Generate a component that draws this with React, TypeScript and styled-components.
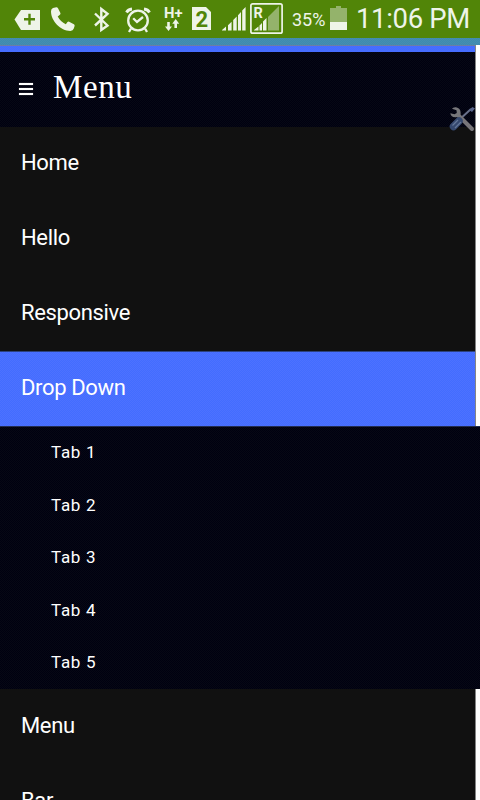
import React from 'react';
import styled, { createGlobalStyle } from 'styled-components';

const GlobalStyle = createGlobalStyle`
  body { margin: 0; background: #fff; overflow: hidden; }
  * { box-sizing: border-box; }
`;

const dither = (a: string, b: string) =>
  `repeating-conic-gradient(${a} 0% 25%, ${b} 0% 50%) 0 0 / 2px 2px`;

const Screen = styled.div`
  width: 480px;
  height: 800px;
  overflow: hidden;
  display: flex;
  flex-direction: column;
  background: #fff;
  color: #fff;
  font-family: Roboto, sans-serif;
`;

const StatusBar = styled.header`
  flex: none;
  height: 38px;
  display: flex;
  background: #518508;
  color: #eef4e8;
`;

const StatusIcon = styled.svg<{ $gap: number }>`
  flex: none;
  display: block;
  height: 38px;
  margin-left: ${(p) => p.$gap}px;
  overflow: visible;
`;

const StatusText = styled.span<{ $gap: number; $width: number; $size: number; $top: number; $spacing?: number }>`
  flex: none;
  width: ${(p) => p.$width}px;
  margin-left: ${(p) => p.$gap}px;
  padding-top: ${(p) => p.$top}px;
  font-size: ${(p) => p.$size}px;
  line-height: 30px;
  letter-spacing: ${(p) => p.$spacing ?? 0}px;
  white-space: nowrap;
`;

const TealStrip = styled.div`
  flex: none;
  height: 7px;
  background: ${dither('#3c8caf', '#488cb0')};
`;

const Panel = styled.div`
  flex: none;
  width: 476px;
  border-right: 1px solid #858585;
`;

const AccentStrip = styled.div`
  height: 7px;
  border-top: 1px solid #6d7ca4;
  background: ${dither('#426dff', '#4a6dff')};
`;

const MenuHeader = styled.div`
  position: relative;
  height: 75px;
  padding-left: 19px;
  display: flex;
  align-items: flex-start;
  background: ${dither('#000010', '#060814')};
`;

const Burger = styled.div`
  width: 14px;
  height: 12px;
  margin-top: 31px;
  display: flex;
  flex-direction: column;
  justify-content: space-between;
`;

const BurgerLine = styled.span`
  height: 2px;
  background: #fff;
  box-shadow: 0 0 1px #bbb;
`;

const Title = styled.h1`
  margin: 15px 0 0 20px;
  font: 400 33px/40px 'Liberation Serif', serif;
  letter-spacing: 0.6px;
`;

const Tools = styled.svg`
  position: absolute;
  left: 448px;
  top: 53px;
`;

const Item = styled.div<{ $active?: boolean }>`
  height: 75px;
  padding-left: 21px;
  font-size: 22px;
  line-height: 71px;
  letter-spacing: -0.35px;
  background: ${(p) => (p.$active ? dither('#426dff', '#4e71ff') : '#111')};
  ${(p) => p.$active && 'border-top: 1px solid #2c427f;'}
`;

const SubMenu = styled.div`
  flex: none;
  width: 480px;
  height: 263px;
  border-top: 1px solid #222c50;
  background: ${dither('#000010', '#060814')};
`;

const SubItem = styled.div`
  height: 52.5px;
  padding-left: 51px;
  font-size: 17px;
  line-height: 50px;
  letter-spacing: 0.7px;
`;

const LowerStack = styled.div`
  flex: none;
  margin-top: -1px;
`;

const LastPanel = styled(Panel)`
  background: #111;
  padding-top: 1px;
`;

const INK = '#eef4e8';
const GREEN = '#518508';

function Status() {
  return (
    <StatusBar>
      <StatusIcon $gap={14} width={26} viewBox="14 0 26 38">
        <path d="M14.5 19.5 21 10H40V30H21Z" fill={INK} />
        <path d="M24 19.2H35M29.5 13.7V24.7" stroke={GREEN} strokeWidth="2.4" />
      </StatusIcon>
      <StatusIcon $gap={11} width={24} viewBox="51 0 24 38">
        <path d="M53 8 56.3 7.3Q57.4 7.2 58 8.2L60.4 13Q60.8 14 59.9 14.8L57.7 16.5Q60.5 21.7 65.8 24.3L67.5 22Q68.2 21.3 69.1 21.7L73.9 24.2Q74.9 24.8 74.6 25.9L73.8 28.6Q73 31 70.4 31C60.5 31 51 21 51 11.3Q51 8.7 53 8Z" fill={INK} />
      </StatusIcon>
      <StatusIcon $gap={19} width={16} viewBox="94 0 16 38">
        <path d="M95 13.5 107.5 25.5 101.3 30V9L107.5 13.8 95 25.5" fill="none" stroke={INK} strokeWidth="2.4" />
      </StatusIcon>
      <StatusIcon $gap={15} width={26} viewBox="125 0 26 38">
        <g fill="none" stroke={INK} strokeWidth="2.3">
          <circle cx="138" cy="20.5" r="9.8" />
          <path d="M133.2 18.2 137 22 143 17M131 28.5 129 32M145 28.5 147 32" />
        </g>
        <path d="M126.5 12.5Q128 9.5 132 9M149.5 12.5Q148 9.5 144 9" fill="none" stroke={INK} strokeWidth="2.8" />
      </StatusIcon>
      <StatusIcon $gap={14} width={18} viewBox="165 0 18 38">
        <text x="164" y="17.5" fontSize="15" fontWeight="700" fill={INK} textLength="18.5" lengthAdjust="spacingAndGlyphs">H+</text>
        <path d="M167.2 22H169.8V26.5H172L168.5 31 165 26.5H167.2ZM174.4 28H177V23.8H179.2L175.7 19 172.2 23.8H174.4Z" fill={INK} />
      </StatusIcon>
      <StatusIcon $gap={9} width={19} viewBox="192 0 19 38">
        <path d="M192 7H206L211 12V30H192Z" fill={INK} />
        <text x="195.5" y="26.5" fontSize="22" fontWeight="700" fill={GREEN}>2</text>
      </StatusIcon>
      <StatusIcon $gap={11} width={24} viewBox="222 0 24 38">
        <path d="M222 30.5V30L226 26.5V30.5ZM228 30.5V25.3L231.6 21.7V30.5ZM233.2 30.5V20L236.7 16.5V30.5ZM238 30.5V15.2L241 12V30.5ZM242.2 30.5V10.5L245.6 7V30.5Z" fill={INK} />
      </StatusIcon>
      <StatusIcon $gap={4} width={33} viewBox="250 0 33 38">
        <rect x="250.9" y="3.8" width="31.2" height="29.4" rx="1.8" fill="none" stroke={INK} strokeWidth="1.7" />
        <text x="253.6" y="17.5" fontSize="14.5" fontWeight="700" fill={INK}>R</text>
        <path d="M268 30.5V17L279 6V30.5Z" fill="#94b36b" />
        <path d="M254 30.5V30L258.5 26.5V30.5ZM259.5 30.5V25.5L262 23V30.5ZM263 30.5V21.5L266.5 18V30.5Z" fill={INK} />
      </StatusIcon>
      <StatusText $gap={9} $width={34} $size={18} $top={5}>35%</StatusText>
      <StatusIcon $gap={4} width={17} viewBox="330 0 17 38">
        <path d="M330 8H336V6H341V8H347V22H330Z" fill="#94b36b" />
        <path d="M330 22H347V30H330Z" fill={INK} />
      </StatusIcon>
      <StatusText $gap={9} $width={120} $size={27.5} $top={4} $spacing={-0.35}>11:06 PM</StatusText>
    </StatusBar>
  );
}

export default function App() {
  return (
    <Screen>
      <GlobalStyle />
      <Status />
      <TealStrip />
      <Panel>
        <AccentStrip />
        <MenuHeader>
          <Burger>
            <BurgerLine />
            <BurgerLine />
            <BurgerLine />
          </Burger>
          <Title>Menu</Title>
          <Tools width="28" height="28" viewBox="0 0 28 28">
            <path d="M11 15 23 4" stroke="#68708a" strokeWidth="2" />
            <path d="M21 5 24.5 2 27 3.5 24 7Z" fill="#59648a" />
            <path d="M11 11 24 24" stroke="#777579" strokeWidth="4" strokeLinecap="round" />
            <path d="M4 3.8 8.5 5.2 8.8 8 6.5 9.2 2.3 8.2Q3 12 7.2 12.2 12.5 12.5 12.7 8.2 12.5 3 8 2.3 5 2 4 3.8Z" fill="#77777a" />
            <path d="M5.5 21.5 11 16" stroke="#35486e" strokeWidth="7.5" strokeLinecap="round" />
            <path d="M4.5 20.5 10 15M7 23 13 17" stroke="#647798" strokeWidth="1.3" />
          </Tools>
        </MenuHeader>
        <Item>Home</Item>
        <Item>Hello</Item>
        <Item>Responsive</Item>
      </Panel>
      <LowerStack>
        <Panel>
          <Item $active>Drop Down</Item>
        </Panel>
        <SubMenu>
          {[1, 2, 3, 4, 5].map((n) => (
            <SubItem key={n}>Tab {n}</SubItem>
          ))}
        </SubMenu>
        <LastPanel>
          <Item>Menu</Item>
          <Item>Bar</Item>
        </LastPanel>
      </LowerStack>
    </Screen>
  );
}
